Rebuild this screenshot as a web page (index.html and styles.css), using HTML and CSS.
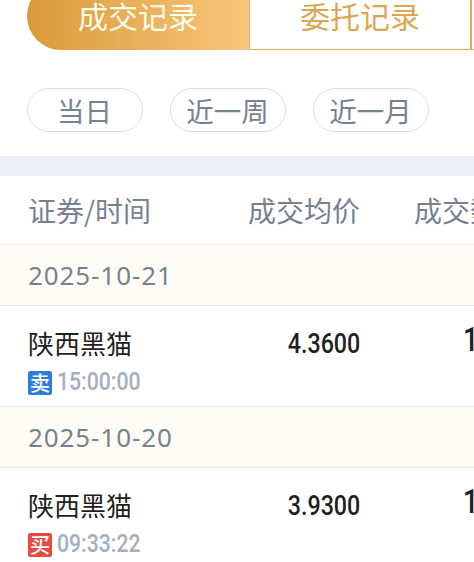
FILE: index.html
```html
<!DOCTYPE html>
<html lang="zh-CN">
<head>
  <meta charset="UTF-8">
  <meta name="viewport" content="width=device-width, initial-scale=1.0">
  <title>成交记录</title>
  <link rel="stylesheet" href="styles.css">
</head>
<body>
  <div class="tabs">
    <div class="tab active">成交记录</div>
    <div class="tab">委托记录</div>
    <div class="tab"></div>
  </div>

  <div class="filters">
    <div class="filter">当日</div>
    <div class="filter">近一周</div>
    <div class="filter">近一月</div>
  </div>

  <div class="divider"></div>

  <div class="row table-head">
    <div>证券/时间</div>
    <div class="right">成交均价</div>
    <div class="right">成交数量</div>
  </div>

  <div class="date">2025-10-21</div>
  <div class="row record">
    <div>
      <div class="name">陕西黑猫</div>
      <div class="time"><span class="badge sell">卖</span><span class="clock">15:00:00</span></div>
    </div>
    <div class="right"><span class="price">4.3600</span></div>
    <div class="amount">1</div>
  </div>

  <div class="date">2025-10-20</div>
  <div class="row record">
    <div>
      <div class="name">陕西黑猫</div>
      <div class="time"><span class="badge buy">买</span><span class="clock">09:33:22</span></div>
    </div>
    <div class="right"><span class="price">3.9300</span></div>
    <div class="amount">1</div>
  </div>
</body>
</html>
```
FILE: styles.css
```css
* {
  box-sizing: border-box;
}

body {
  margin: 0;
  height: 562px;
  overflow: hidden;
  background-color: #fff;
  font-family: "Noto Sans CJK SC", sans-serif;
  color: #76838f;
}

.tabs {
  display: flex;
  height: 68px;
  margin: -18px 0 0 27px;
  overflow: hidden;
}

.tab {
  flex: none;
  width: 222px;
  border: 1px solid #d9ae62;
  font-size: 30px;
  line-height: 64px;
  text-align: center;
  color: #dba653;
}

.tab.active {
  border: none;
  border-radius: 34px 0 0 34px;
  background: linear-gradient(to right, #db9a38, #f8c67c);
  line-height: 66px;
  color: #fffbe9;
}

.filters {
  display: flex;
  gap: 27px;
  padding: 38px 27px 24px;
}

.filter {
  flex: none;
  width: 116px;
  height: 44px;
  border: 1px solid #dcdfe2;
  border-radius: 22px;
  font-size: 27.5px;
  line-height: 42px;
  text-align: center;
  text-indent: -1px;
}

.divider {
  height: 20px;
  background-color: #edf1f7;
}

.row {
  display: grid;
  grid-template-columns: 160px 172px 166px;
  padding-left: 28px;
  overflow: hidden;
}

.right {
  text-align: right;
}

.table-head {
  height: 68px;
  font-size: 28px;
  line-height: 68px;
}

.date {
  height: 62px;
  padding-left: 28px;
  border-top: 1px solid #f7f0ea;
  border-bottom: 1px solid #e8e6e4;
  background-color: #fffbf5;
  font-family: "Noto Sans", sans-serif;
  font-size: 26px;
  line-height: 61px;
  letter-spacing: 0.9px;
}

.record {
  height: 100px;
}

.name {
  margin-top: 18px;
  font-size: 26px;
  line-height: 38px;
  color: #1f1f1f;
}

.time {
  display: flex;
  align-items: center;
  height: 38px;
}

.badge {
  width: 24px;
  height: 24px;
  margin-top: 4px;
  border-radius: 2px;
  font-size: 20px;
  font-weight: 500;
  line-height: 23px;
  text-align: center;
  color: #fff;
}

.sell {
  background-color: #2d7fd6;
}

.buy {
  background-color: #e74a40;
}

.clock {
  margin: -2px 0 0 5px;
  font-family: Roboto, sans-serif;
  font-size: 26.5px;
  font-weight: 500;
  color: #a3b0bd;
  transform: scaleX(0.8);
  transform-origin: left;
}

.price {
  display: inline-block;
  margin-top: 19px;
  font-family: Roboto, sans-serif;
  font-size: 27px;
  font-weight: 500;
  line-height: 38px;
  color: #1f1f1f;
  transform: scaleX(0.86);
  transform-origin: right;
}

.amount {
  padding: 14px 0 0 103px;
  font-family: Roboto, sans-serif;
  font-size: 34px;
  font-weight: 500;
  line-height: 38px;
  color: #1f1f1f;
  transform: scaleX(0.8);
  transform-origin: 103px 0;
}
```
